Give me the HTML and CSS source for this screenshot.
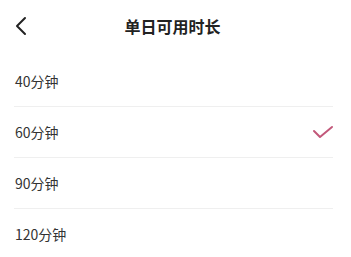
FILE: index.html
```html
<!DOCTYPE html>
<html lang="zh-CN">
<head>
    <meta charset="UTF-8">
    <meta name="viewport" content="width=device-width, initial-scale=1.0">
    <title>单日可用时长</title>
    <link rel="stylesheet" href="styles.css">
</head>
<body>

<div class="page">
    <div class="header">
        <span class="back">
            <svg width="14" height="20" viewBox="0 0 14 20">
                <polyline points="11,2 3,10 11,18" fill="none" stroke="#222" stroke-width="2" stroke-linecap="round" stroke-linejoin="round"/>
            </svg>
        </span>
        <h1 class="title">单日可用时长</h1>
    </div>

    <ul class="options">
        <li class="option">40分钟</li>
        <li class="option selected">
            60分钟
            <svg class="check" width="22" height="14" viewBox="0 0 22 14">
                <polyline points="2,6 8,12 20,2" fill="none" stroke="#c2587a" stroke-width="2" stroke-linecap="round" stroke-linejoin="round"/>
            </svg>
        </li>
        <li class="option">90分钟</li>
        <li class="option">120分钟</li>
    </ul>
</div>

</body>
</html>
```

FILE: styles.css
```css
body {
    margin: 0;
    background-color: #fff;
    font-family: "Noto Sans CJK SC", "Noto Sans", sans-serif;
    color: #333;
}
.page {
    width: 351px;
}
.header {
    position: relative;
    height: 52px;
    display: flex;
    align-items: center;
    justify-content: center;
}
.back {
    position: absolute;
    left: 14px;
    top: 16px;
    display: flex;
}
.title {
    margin: 0;
    font-size: 16px;
    font-weight: bold;
    color: #222;
    margin-right: 6px;
}
.options {
    list-style: none;
    margin: 4px 18px 0 14px;
    padding: 0;
}
.option {
    height: 50px;
    display: flex;
    align-items: center;
    justify-content: space-between;
    font-size: 14px;
    padding-left: 1px;
    border-bottom: 1px solid #efefef;
}
.check {
    margin-right: -1px;
}
```
